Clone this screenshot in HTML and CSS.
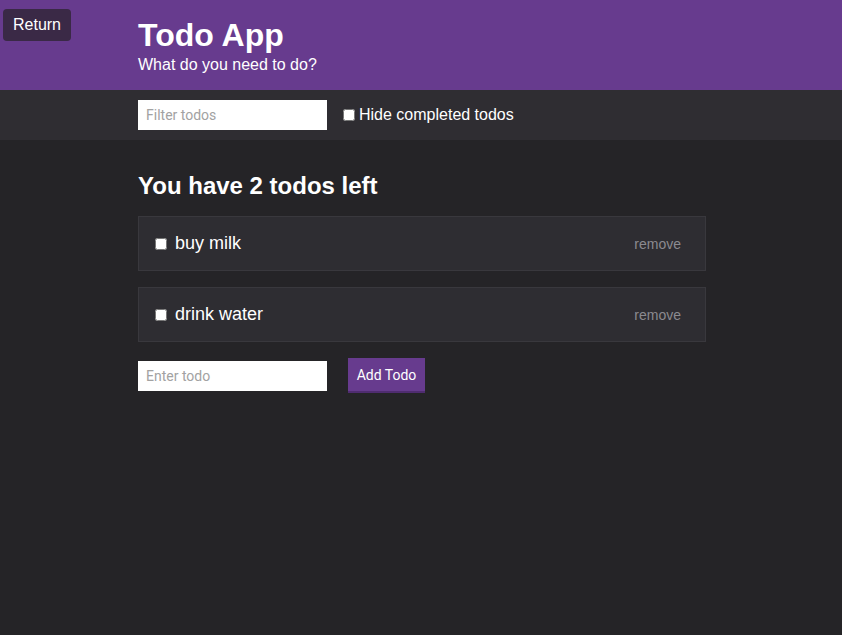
FILE: index.html
```html
<!DOCTYPE html>
<html>
<head>
<meta charset="utf-8">
<link rel="stylesheet" href="styles.css">
</head>
<body>
<button class="return-btn">Return</button>
<header class="header">
  <div class="wrap">
    <h1 class="title">Todo App</h1>
    <p class="subtitle">What do you need to do?</p>
  </div>
</header>
<div class="filter-bar">
  <div class="wrap filter-row">
    <input class="text-input" type="text" placeholder="Filter todos">
    <label class="hide-label"><input type="checkbox" class="check"> Hide completed todos</label>
  </div>
</div>
<main class="wrap main">
  <h2 class="count">You have 2 todos left</h2>
  <ul class="todo-list">
    <li class="todo">
      <label class="todo-label"><input type="checkbox" class="check"><span>buy milk</span></label>
      <span class="remove">remove</span>
    </li>
    <li class="todo">
      <label class="todo-label"><input type="checkbox" class="check"><span>drink water</span></label>
      <span class="remove">remove</span>
    </li>
  </ul>
  <form class="add-row">
    <input class="text-input" type="text" placeholder="Enter todo">
    <button type="button" class="add-btn">Add Todo</button>
  </form>
</main>
</body>
</html>
```

FILE: styles.css
```css
* { box-sizing: border-box; }
html, body {
  margin: 0;
  padding: 0;
  background: #252427;
  color: #ffffff;
  font-family: "Liberation Sans", Arial, sans-serif;
  height: 100%;
}
.wrap {
  margin-left: 138px;
  width: 568px;
}
.return-btn {
  position: absolute;
  left: 3px;
  top: 9px;
  width: 68px;
  height: 32px;
  border: none;
  border-radius: 4px;
  background: #3a2946;
  color: #ffffff;
  font-family: "Liberation Sans", Arial, sans-serif;
  font-size: 16px;
  padding: 0;
}
.header {
  background: #673b8e;
  height: 90px;
  padding-top: 16px;
}
.title {
  margin: 0;
  font-size: 32px;
  line-height: 38px;
  font-weight: bold;
}
.subtitle {
  margin: 1px 0 0 0;
  font-size: 16px;
  line-height: 20px;
}
.filter-bar {
  background: #2f2d32;
  height: 50px;
  padding-top: 10px;
}
.filter-row {
  display: flex;
  align-items: center;
  gap: 16px;
}
.text-input {
  width: 189px;
  height: 30px;
  border: none;
  border-radius: 0;
  background: #ffffff;
  padding: 0 8px;
  font-family: Roboto, "Liberation Sans", sans-serif;
  font-size: 14px;
  color: #333;
  outline: none;
}
.text-input::placeholder { color: #a2a2a2; }
.hide-label {
  display: flex;
  align-items: center;
  gap: 4px;
  font-size: 16px;
}
.check {
  margin: 0;
  width: 12px;
  height: 12px;
}
.main {
  padding-top: 172px;
  padding-top: 32px;
}
.count {
  margin: 0 0 16px 0;
  font-size: 24px;
  line-height: 28px;
  font-weight: bold;
}
.todo-list {
  list-style: none;
  margin: 0;
  padding: 0;
  display: flex;
  flex-direction: column;
  gap: 16px;
}
.todo {
  height: 55px;
  background: #2e2d32;
  border: 1px solid #39383d;
  display: flex;
  align-items: center;
  justify-content: space-between;
  padding: 0 24px 0 16px;
}
.todo-label {
  display: flex;
  align-items: center;
  gap: 8px;
  font-size: 18px;
}
.remove {
  color: #8b8a8f;
  font-size: 14px;
}
.add-row {
  margin: 16px 0 0 0;
  display: flex;
  align-items: center;
  gap: 21px;
}
.add-btn {
  height: 35px;
  width: 77px;
  border: none;
  border-bottom: 2px solid #4f2c70;
  background: #673b8e;
  color: #ffffff;
  font-family: Roboto, "Liberation Sans", sans-serif;
  font-size: 14px;
  padding: 0;
}
```
